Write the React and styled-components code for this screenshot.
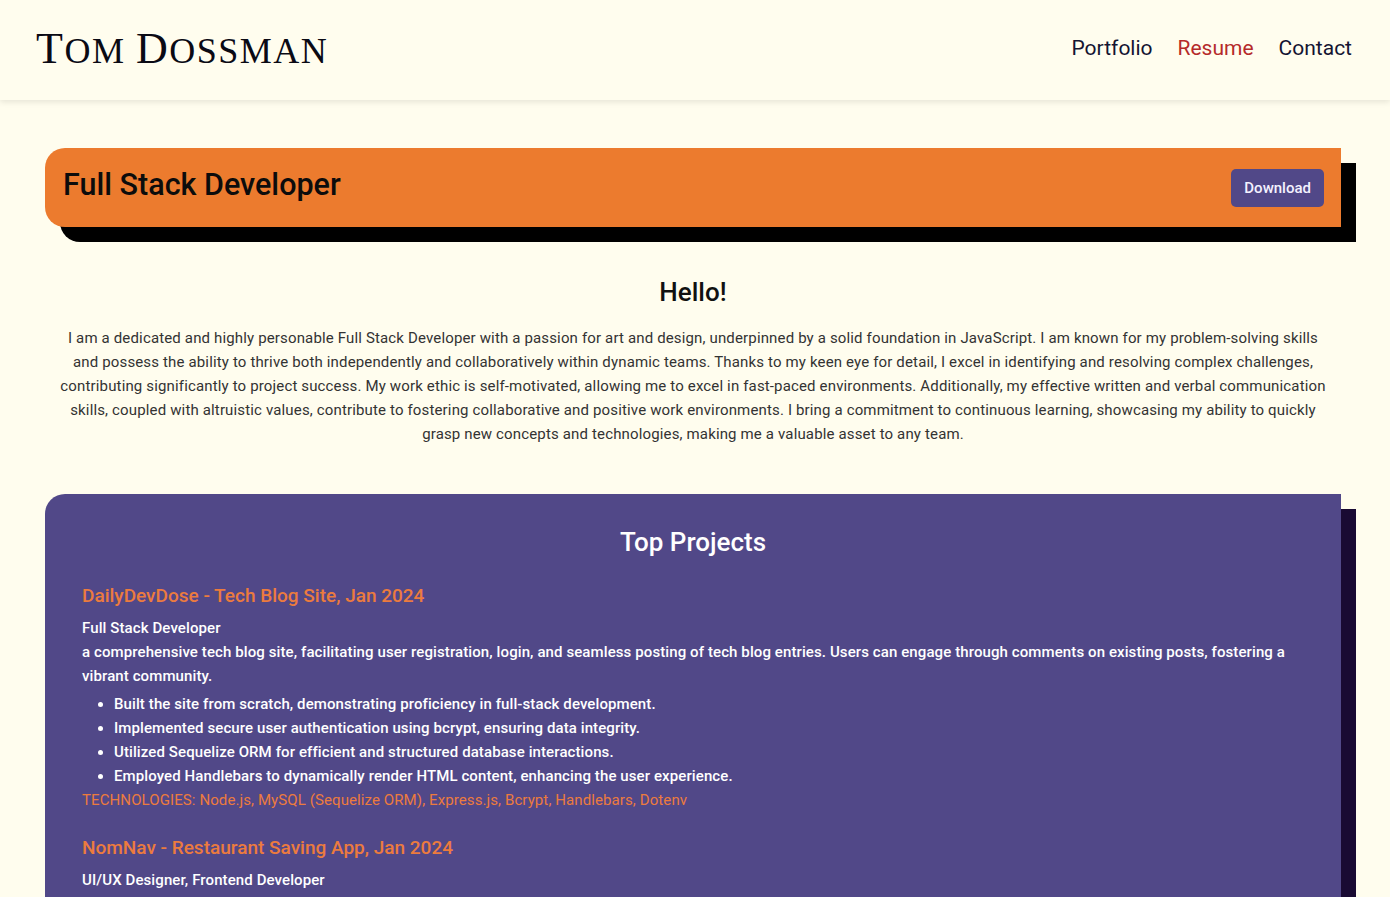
import React from "react";
import styled, { createGlobalStyle } from "styled-components";

const GlobalStyle = createGlobalStyle`
  body {
    margin: 0;
    background: #fffdee;
    font-family: "Roboto", "Noto Sans", sans-serif;
  }
`;

const projects = [
  {
    title: "DailyDevDose - Tech Blog Site, Jan 2024",
    role: "Full Stack Developer",
    description:
      "a comprehensive tech blog site, facilitating user registration, login, and seamless posting of tech blog entries. Users can engage through comments on existing posts, fostering a vibrant community.",
    points: [
      "Built the site from scratch, demonstrating proficiency in full-stack development.",
      "Implemented secure user authentication using bcrypt, ensuring data integrity.",
      "Utilized Sequelize ORM for efficient and structured database interactions.",
      "Employed Handlebars to dynamically render HTML content, enhancing the user experience.",
    ],
    tech: "Node.js, MySQL (Sequelize ORM), Express.js, Bcrypt, Handlebars, Dotenv",
  },
  {
    title: "NomNav - Restaurant Saving App, Jan 2024",
    role: "UI/UX Designer, Frontend Developer",
    description:
      "a web application that lets users search for restaurants near them and save their favorites for later.",
    points: [
      "Designed the user interface and user experience flows.",
      "Integrated third-party APIs for restaurant and map data.",
    ],
    tech: "HTML, CSS, JavaScript, Bulma, Google Maps API",
  },
];

function App() {
  return (
    <>
      <GlobalStyle />
      <Header>
        <Logo>
          <Cap>T</Cap>om <Cap>D</Cap>ossman
        </Logo>
        <Nav>
          <NavLink href="#portfolio">Portfolio</NavLink>
          <NavLink href="#resume" active>
            Resume
          </NavLink>
          <NavLink href="#contact">Contact</NavLink>
        </Nav>
      </Header>
      <Main>
        <TitleCard>
          <h1>Full Stack Developer</h1>
          <DownloadButton>Download</DownloadButton>
        </TitleCard>
        <Intro>
          <h2>Hello!</h2>
          <p>
            I am a dedicated and highly personable Full Stack Developer with a
            passion for art and design, underpinned by a solid foundation in
            JavaScript. I am known for my problem-solving skills and possess the
            ability to thrive both independently and collaboratively within
            dynamic teams. Thanks to my keen eye for detail, I excel in
            identifying and resolving complex challenges, contributing
            significantly to project success. My work ethic is self-motivated,
            allowing me to excel in fast-paced environments. Additionally, my
            effective written and verbal communication skills, coupled with
            altruistic values, contribute to fostering collaborative and
            positive work environments. I bring a commitment to continuous
            learning, showcasing my ability to quickly grasp new concepts and
            technologies, making me a valuable asset to any team.
          </p>
        </Intro>
        <ProjectsCard>
          <h2>Top Projects</h2>
          {projects.map((project) => (
            <Project key={project.title}>
              <h3>{project.title}</h3>
              <Role>{project.role}</Role>
              <Description>{project.description}</Description>
              <Points>
                {project.points.map((point) => (
                  <li key={point}>{point}</li>
                ))}
              </Points>
              <Tech>TECHNOLOGIES: {project.tech}</Tech>
            </Project>
          ))}
        </ProjectsCard>
      </Main>
    </>
  );
}

const Header = styled.header`
  height: 100px;
  padding: 0 38px 0 36px;
  display: flex;
  align-items: center;
  justify-content: space-between;
  background: #fffdee;
  box-shadow: 0 2px 6px rgba(0, 0, 0, 0.1);
`;

const Logo = styled.div`
  font-family: "Liberation Serif", serif;
  text-transform: uppercase;
  font-size: 36px;
  letter-spacing: 1.5px;
  color: #0a0a14;
  margin-top: -4px;
`;

const Cap = styled.span`
  font-size: 44px;
`;

const Nav = styled.nav`
  display: flex;
  gap: 25px;
  margin-top: -4px;
`;

const NavLink = styled.a`
  font-size: 21px;
  text-decoration: none;
  color: ${(props) => (props.active ? "#b52a2a" : "#141432")};
`;

const Main = styled.main`
  padding: 48px 49px 0 45px;
`;

const TitleCard = styled.section`
  height: 79px;
  padding: 0 17px 0 18px;
  display: flex;
  align-items: center;
  justify-content: space-between;
  background: #ec7b2e;
  border-radius: 20px 0 0 20px;
  box-shadow: 15px 15px 0 #000;

  h1 {
    margin: -6px 0 0;
    font-size: 30.5px;
    font-weight: 500;
    color: #0c0c0c;
  }
`;

const DownloadButton = styled.button`
  height: 38px;
  padding: 0 13px;
  border: none;
  border-radius: 5px;
  background: #514888;
  color: #f4f2ff;
  font-family: inherit;
  font-size: 15px;
  font-weight: 500;
`;

const Intro = styled.section`
  padding: 50px 15px 0;
  text-align: center;

  h2 {
    margin: 0 0 19px;
    font-size: 26px;
    font-weight: 500;
    color: #111;
  }

  p {
    margin: 0;
    font-size: 15px;
    line-height: 24px;
    letter-spacing: 0.15px;
    color: #333;
  }
`;

const ProjectsCard = styled.section`
  margin-top: 48px;
  padding: 33px 37px 40px;
  background: #514888;
  border-radius: 20px 0 0 0;
  box-shadow: 15px 15px 0 #190a33;
  color: #fff;

  h2 {
    margin: 0 0 27px;
    text-align: center;
    font-size: 26px;
    font-weight: 500;
  }
`;

const Project = styled.article`
  margin-bottom: 24px;
  font-size: 15px;
  line-height: 24px;
  font-weight: 500;
  letter-spacing: 0.1px;

  h3 {
    margin: 0 0 8px;
    font-size: 19px;
    font-weight: 500;
    letter-spacing: 0;
    color: #ec7b3e;
  }
`;

const Role = styled.div``;

const Description = styled.div``;

const Points = styled.ul`
  margin: 4px 0 0;
  padding-left: 32px;
`;

const Tech = styled.div`
  color: #ec7b3e;
  font-weight: 400;
`;

export default App;
